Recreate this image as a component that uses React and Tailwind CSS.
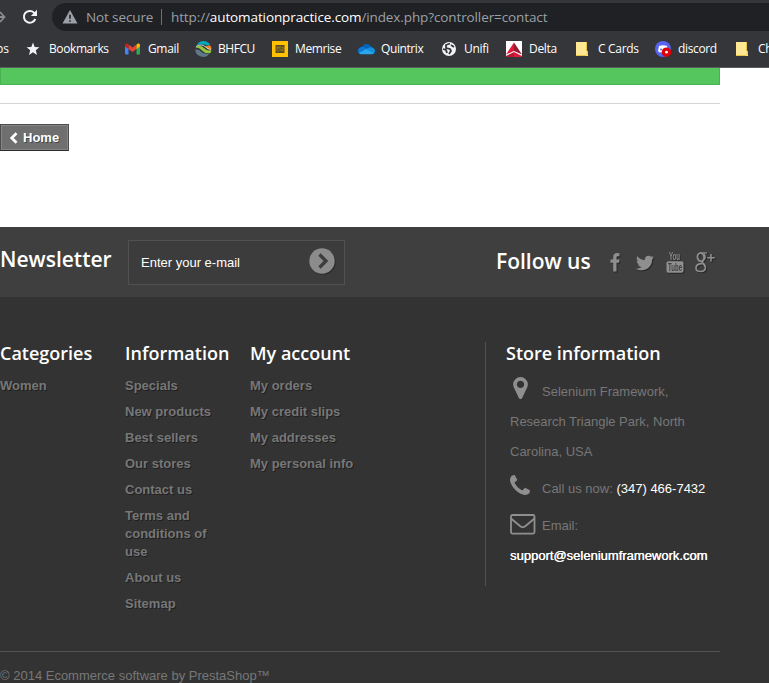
import { FaTwitter } from "react-icons/fa";

const MAP_PIN =
  "M768 896q0 106-75 181t-181 75-181-75-75-181 75-181 181-75 181 75 75 181zm256 0q0-109-33-179l-364-774q-16-33-47.500-52t-67.500-19-67.500 19-46.500 52l-365 774q-33 70-33 179 0 212 150 362t362 150 362-150 150-362z";
const PHONE =
  "M1408 296q0-27-10-70.500t-21-68.500q-21-50-122-106-94-51-186-51-27 0-53 3.500t-57.500 12.500-47 14.500-55.500 20.500-49 18q-98 35-175 83-127 79-264 216t-216 264q-48 77-83 175-3 9-18 49t-20.500 55.500-14.500 47-12.500 57.500-3.500 53q0 92 51 186 56 101 106 122 25 11 68.500 21t70.500 10q14 0 21-3 18-6 53-76 11-19 30-54t35-63.500 31-53.500q3-4 17.500-25t21.500-35.500 7-28.500q0-20-28.500-50t-62-55-62-53-28.500-46q0-9 5-22.500t8.500-20.500 14-24 11.500-19q76-137 174-235t235-174q2-1 19-11.500t24-14 20.500-8.500 22.500-5q18 0 46 28.500t53 62 55 62 50 28.500q14 0 28.500-7t35.500-21.500 25-17.500q25-15 53.500-31t63.500-35 54-30q70-35 76-53 3-7 3-21z";

const ui = "font-['Open_Sans','Noto_Sans',sans-serif]";

function Bookmark({ icon, label, width, tracking }) {
  return (
    <div className={`flex shrink-0 items-center whitespace-nowrap ${width}`}>
      <span className="w-[23px] shrink-0">{icon}</span>
      <span className={tracking}>{label}</span>
    </div>
  );
}

function Folder() {
  return (
    <svg width="16" height="16" viewBox="0 0 16 16">
      <path d="M1 1h11v9h1v5H1z" fill="#ffe794" />
      <path d="M11.500 1v9h1v3l-2 1.500H1" fill="none" stroke="#eac340" />
    </svg>
  );
}

const bookmarks = [
  {
    label: "Bookmarks", width: "w-[99px]", tracking: "tracking-[-0.4px]",
    icon: (
      <svg width="14" height="14" viewBox="0 0 14 14">
        <path d="M7 .5l1.700 4.400 4.700.3-3.600 3 1.200 4.700L7 10.300 3 12.900l1.200-4.700-3.600-3 4.700-.3z" fill="#f1f3f4" />
      </svg>
    ),
  },
  {
    label: "Gmail", width: "w-[70px]", tracking: "tracking-[-0.35px]",
    icon: (
      <svg width="15" height="12" viewBox="0 0 15 12">
        <path d="M0 3l3.500 2v6.500H1q-1 0-1-1z" fill="#4285f4" />
        <path d="M15 3l-3.500 2v6.500H14q1 0 1-1z" fill="#34a853" />
        <path d="M3.500 1.500l4 3 4-3V6l-4 3-4-3z" fill="#ea4335" />
        <path d="M0 3V2q0-2 2-1.500L3.500 1.500V6L0 3.500z" fill="#c5221f" />
        <path d="M15 3V2q0-2-2-1.500l-1.500 1V6L15 3.500z" fill="#fbbc04" />
      </svg>
    ),
  },
  {
    label: "BHFCU", width: "w-[77px]", tracking: "tracking-[-0.45px]",
    icon: (
      <svg width="17" height="16" viewBox="0 0 17 16">
        <path d="M2 4Q4 0 8.500 0T15 4l-3 .5Q7 2 2 4.500z" fill="#00a9bd" />
        <path d="M10 5.500l5-1.300q1.500 1.500 1.500 4-4 .3-6.500-2.700z" fill="#f58220" />
        <path d="M0 6.500q6-3 9 .5t7.500 2l-1 3Q10 13 7 9.500T0 6.500z" fill="#93c83e" />
        <path d="M0 8.500q4-.5 6 2t8 2.500Q12 16 8.500 16 1 15.500 0 8.500z" fill="#60798a" />
        <path d="M1 5.500q6-3 9 0t6 3" stroke="#f4f7e8" strokeWidth=".8" fill="none" />
      </svg>
    ),
  },
  {
    label: "Memrise", width: "w-[86px]", tracking: "tracking-[-0.4px]",
    icon: (
      <svg width="16" height="16" viewBox="0 0 16 16">
        <path d="M0 0h16v16H0z" fill="#ffc000" />
        <path d="M3.500 4h9v8h-9z" fill="#554b27" />
        <path d="M4 6h3v1H5v3h2M8 5v5M9 6l3 1-3 2 3 1" stroke="#b38b12" strokeWidth=".7" fill="none" />
      </svg>
    ),
  },
  {
    label: "Quintrix", width: "w-[83px]", tracking: "tracking-[-0.4px]",
    icon: (
      <svg width="17" height="12" viewBox="0 0 17 12">
        <path d="M0 8Q0 4.500 4 4 5.500.8 9 1q3.200.1 4.500 3.400Q17 5 17 8.500T13 11H3Q0 11 0 8z" fill="#0364b8" />
        <path d="M0 8Q0 4.500 4 4q2-.5 4.500 1.500L2 10Q0 9.500 0 8z" fill="#0f78d4" />
        <path d="M8 6l3-1.500q5-1 6 3.500l-1 2z" fill="#1490df" />
        <path d="M1 10l7-4 8 4q-1 1.300-3 1.300H3q-1.500 0-2-1.300z" fill="#28a8ea" />
      </svg>
    ),
  },
  {
    label: "Unifi", width: "w-[65px]", tracking: "tracking-[-0.3px]",
    icon: (
      <svg width="16" height="16" viewBox="0 0 16 16">
        <circle cx="8" cy="8" r="7" fill="#f1f3f4" />
        <path d="M9 2.500L5 4v3l4 1 1 2-2 3M2 8l3 1 1 3M10 4l3 2" stroke="#35363a" strokeWidth="1.800" fill="none" />
      </svg>
    ),
  },
  {
    label: "Delta", width: "w-[69px]", tracking: "tracking-[-0.3px]",
    icon: (
      <svg width="16" height="16" viewBox="0 0 16 16">
        <path d="M0 0h16v16H0z" fill="#fff" />
        <path d="M8 1.500V10L0 13.500z" fill="#e31837" />
        <path d="M8 1.500V10l8 3.500z" fill="#991932" />
        <path d="M8 11l-8 4v1h8z" fill="#b11b35" />
        <path d="M8 11l8 4v1H8z" fill="#e31837" />
      </svg>
    ),
  },
  { label: "C Cards", width: "w-[80px]", tracking: "tracking-[-0.3px]", icon: <Folder /> },
  {
    label: "discord", width: "w-[80px]", tracking: "tracking-[-0.35px]",
    icon: (
      <svg width="17" height="16" viewBox="0 0 17 16">
        <circle cx="8" cy="8" r="8" fill="#5865f2" />
        <path d="M4 5q4-1.500 8 0l1 5q-2 2-5 1.500Q4 12 3 10z" fill="#fff" />
        <circle cx="6" cy="8.500" r="1" fill="#5865f2" />
        <circle cx="11.500" cy="11.200" r="4.800" fill="#db0005" />
        <circle cx="11.500" cy="11.200" r="1.400" fill="#fff" />
      </svg>
    ),
  },
  { label: "Checking", width: "w-[80px]", tracking: "tracking-[-0.3px]", icon: <Folder /> },
];

function Browser() {
  return (
    <header className={`h-[68px] overflow-hidden border-b border-[#5b5c5f] bg-[#35363a] pt-[3px] text-white ${ui}`}>
      <div className="flex h-7">
        <div className="flex w-[52px] shrink-0 items-center">
          <svg width="6" height="12" viewBox="0 0 6 12" className="shrink-0">
            <path d="M0 1l4.500 5L0 11M0 6h4" fill="none" stroke="#8b8c8f" strokeWidth="1.800" />
          </svg>
          <svg width="16" height="16" viewBox="0 0 16 16" className="ml-4 shrink-0">
            <path d="M13.300 10A5.900 5.900 0 1 1 12 3.600L14 5.800" fill="none" stroke="#f1f3f4" strokeWidth="2" />
            <path d="M15 .8V7H8.800z" fill="#f1f3f4" />
          </svg>
        </div>
        <div className="flex w-[717px] shrink-0 items-center rounded-l-full bg-[#202124] pl-[10px] text-[13.500px] leading-7 text-[#9aa0a6]">
          <svg width="16" height="14" viewBox="0 0 16 14" className="shrink-0">
            <path d="M8 0l7.500 13.500H.5z" fill="#9aa0a6" />
            <path d="M7.200 4.800h1.600v4H7.200zM7.200 10.200h1.600v1.600H7.200z" fill="#202124" />
          </svg>
          <span className="ml-2 w-[75px] whitespace-nowrap tracking-[-0.12px]">Not secure</span>
          <span className="h-4 w-px bg-[#6d7074]" />
          <span className="ml-[9px] whitespace-nowrap tracking-[-0.11px]">
            http://<span className="text-white">automationpractice.com</span>/index.php?controller=contact
          </span>
        </div>
      </div>
      <nav className="flex h-9 items-center text-[12px]">
        <span className="w-[26px] shrink-0 -indent-1">ps</span>
        {bookmarks.map((b) => <Bookmark key={b.label} {...b} />)}
      </nav>
    </header>
  );
}

function LinkColumn({ title, links }) {
  return (
    <section className="w-[125px] shrink-0">
      <h4 className="whitespace-nowrap font-['Open_Sans',sans-serif] text-[18px] font-semibold leading-[22px] text-white">{title}</h4>
      <ul className="mt-[13px] flex w-[94px] flex-col gap-2 text-[13px] font-bold leading-[18px] text-[#777] [text-shadow:1px_1px_0_rgba(0,0,0,0.4)]">
        {links.map((l) => (
          <li key={l} className={l.startsWith("Terms") ? "" : "whitespace-nowrap"}>{l}</li>
        ))}
      </ul>
    </section>
  );
}

function Social() {
  return (
    <div className="flex items-center text-[#8f8f8f] drop-shadow-[1px_1px_0_rgba(0,0,0,0.4)]">
      <svg width="10" height="19" viewBox="0 0 10 19" className="ml-[19px]">
        <path d="M9.500.2v3H7.800q-1.300 0-1.300 1.300v2.100h3L9.100 9.700H6.500v8.800H3.200V9.700H.5V6.600h2.700V4.200Q3.200.1 7.200.1z" fill="currentColor" />
      </svg>
      <FaTwitter size={18} className="ml-4 mt-0.5" />
      <svg width="18" height="21" viewBox="0 0 18 21" className="ml-3 overflow-visible">
        <text x="3" y="8.200" textLength="11" lengthAdjust="spacingAndGlyphs" fontSize="11" fontWeight="bold" fontFamily="Liberation Sans Narrow, Liberation Sans" fill="currentColor">You</text>
        <rect x=".5" y="9.300" width="17" height="11.500" rx="2" fill="currentColor" />
        <text x="2" y="19" textLength="14" lengthAdjust="spacingAndGlyphs" fontSize="11" fontWeight="bold" fontFamily="Liberation Sans Narrow, Liberation Sans" fill="#3f3f3f">Tube</text>
      </svg>
      <svg width="20" height="21" viewBox="0 0 20 21" className="ml-[11px]" fill="none" stroke="currentColor">
        <path d="M12 .9H7" strokeWidth="1.200" />
        <ellipse cx="5.800" cy="5.200" rx="3.300" ry="4.200" strokeWidth="1.800" transform="rotate(-10 5.800 5.200)" />
        <path d="M8.800 1.500q1.400 1.600 1.300 3.600-.1 1.900-2 3.200-1.800 1.300-.3 2.700 2.700 1.700 2.600 4.100" strokeWidth="1.600" />
        <path d="M7.500 11.600Q1.200 11.500 1 15.900q.1 3.600 4.700 3.600 4.700-.2 4.700-4 0-2-2.400-3.600" strokeWidth="1.600" />
        <path d="M16 2v7.500M12.300 5.700h7.500" strokeWidth="1.500" />
      </svg>
    </div>
  );
}

function Footer() {
  return (
    <footer>
      <div className="h-[70px] bg-[#3f3f3f]">
        <div className="flex w-[720px] pt-[13px] font-['Open_Sans',sans-serif] text-[21px] font-semibold leading-[26px] text-white">
          <h4 className="w-32 pt-1.5">Newsletter</h4>
          <div className="flex h-[45px] w-[217px] items-center border border-[#515151] bg-[#3c3c3c] pl-3 font-['Liberation_Sans',sans-serif] text-[13px] font-normal">
            <span className="w-[168px]">Enter your e-mail</span>
            <svg width="26" height="26" viewBox="0 0 26 26" className="-mt-[3px] drop-shadow-[1px_1px_0_rgba(0,0,0,0.3)]">
              <circle cx="13" cy="13" r="12.700" fill="#8c8c8c" />
              <path d="M10.500 6.500L17 13l-6.500 6.500" fill="none" stroke="#3d3d3d" strokeWidth="3.300" />
            </svg>
          </div>
          <div className="ml-[151px] flex h-11 items-center">
            <h4 className="w-[95px] whitespace-nowrap pb-0.5">Follow us</h4>
            <Social />
          </div>
        </div>
      </div>
      <div className="h-[386px] bg-[#333] pt-[45px] font-['Liberation_Sans',sans-serif]">
        <div className="flex h-[310px] w-[720px] border-b border-[#515151]">
          <LinkColumn title="Categories" links={["Women"]} />
          <LinkColumn title="Information" links={["Specials", "New products", "Best sellers", "Our stores", "Contact us", "Terms and conditions of use", "About us", "Sitemap"]} />
          <LinkColumn title="My account" links={["My orders", "My credit slips", "My addresses", "My personal info"]} />
          <section className="ml-[110px] h-[244px] w-[235px] border-l border-[#515151] pl-5">
            <h4 className="font-['Open_Sans',sans-serif] text-[18px] font-semibold leading-[22px] text-white">Store information</h4>
            <div className="pl-1 text-[13px] leading-[30px] text-[#777]">
              <div className="mt-[13px] flex h-[30px]">
                <svg width="15" height="22" viewBox="0 0 1024 1536" className="ml-[3px] mr-3.5">
                  <path d={MAP_PIN} fill="#908f8f" transform="translate(0 1408) scale(1 -1)" />
                </svg>
                <span>Selenium Framework,</span>
              </div>
              <div>Research Triangle Park, North<br />Carolina, USA</div>
              <div className="mt-[7px] flex h-[30px]">
                <svg width="20" height="20" viewBox="0 0 1408 1408" className="mr-3 mt-px">
                  <path d={PHONE} fill="#908f8f" transform="translate(0 1408) scale(1 -1)" />
                </svg>
                <span>Call us now: <span className="text-white">(347) 466-7432</span></span>
              </div>
              <div className="mt-[7px] flex h-[30px]">
                <svg width="26" height="21" viewBox="0 0 26 21" fill="none" stroke="#908f8f" strokeWidth="1.800" className="mr-1.5 mt-[3px]">
                  <rect x="1" y="1" width="23.500" height="18.600" rx="1.500" />
                  <path d="M1 4.500l9 7.500q2.800 2.400 5.500 0l9-7.500" />
                </svg>
                <span>Email:</span>
              </div>
              <div className="text-white [text-shadow:0.3px_0_0_#fff]">support@seleniumframework.com</div>
            </div>
          </section>
        </div>
        <p className="mt-[15px] text-[13px] leading-[18px] text-[#777]">© 2014 Ecommerce software by PrestaShop™</p>
      </div>
    </footer>
  );
}

export default function App() {
  return (
    <div className="h-[683px] w-[769px] overflow-hidden bg-white">
      <Browser />
      <main className="h-[159px] w-[720px] font-['Liberation_Sans',sans-serif]">
        <div className="h-[17px] border border-t-0 border-[#48b151] bg-[#55c65e]" />
        <div className="mt-[18px] h-px bg-[#d6d4d4]" />
        <button className="mt-5 flex h-[27px] w-[69px] items-center border border-[#4d4d4d] border-b-[#2b2b2b] bg-[#6f6f6f] pl-2 text-[13px] font-bold text-white shadow-[inset_0_0_0_1px_#858585] [text-shadow:1px_1px_0_rgba(0,0,0,0.4)]">
          <svg width="10" height="12" viewBox="0 0 10 12" className="mr-1 shrink-0">
            <path d="M7.500 1.200L2.700 6l4.800 4.800" fill="none" stroke="#fff" strokeWidth="2.700" />
          </svg>
          Home
        </button>
      </main>
      <Footer />
    </div>
  );
}
